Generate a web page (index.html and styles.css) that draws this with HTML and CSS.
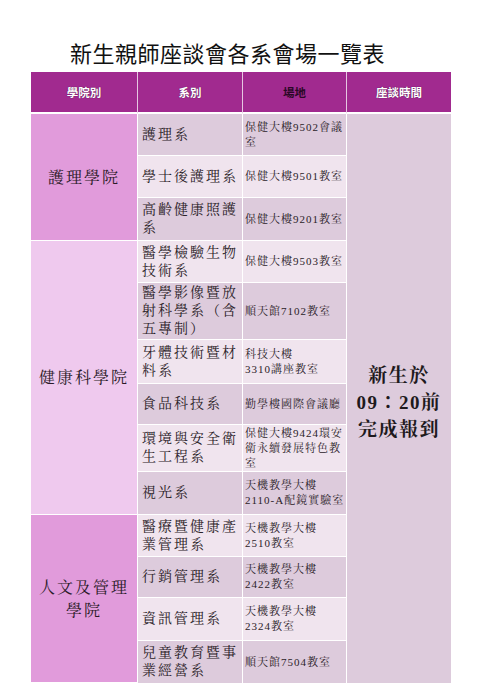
FILE: index.html
```html
<!DOCTYPE html>
<html lang="zh-Hant">
<head>
<meta charset="utf-8">
<link rel="stylesheet" href="styles.css">
</head>
<body>
<div class="page">
  <h1 class="title">新生親師座談會各系會場一覽表</h1>
  <table class="sched">
    <colgroup>
      <col class="c1"><col class="c2"><col class="c3"><col class="c4">
    </colgroup>
    <thead>
      <tr class="head">
        <th>學院別</th>
        <th>系別</th>
        <th class="dark">場地</th>
        <th>座談時間</th>
      </tr>
    </thead>
    <tbody>
      <tr class="h42">
        <td class="college pink" rowspan="3">護理學院</td>
        <td class="dept a">護理系</td>
        <td class="loc a">保健大樓9502會議室</td>
        <td class="time" rowspan="13">新生於<br>09：20前<br>完成報到</td>
      </tr>
      <tr class="h42">
        <td class="dept b">學士後護理系</td>
        <td class="loc b">保健大樓9501教室</td>
      </tr>
      <tr class="h43">
        <td class="dept a">高齡健康照護系</td>
        <td class="loc a">保健大樓9201教室</td>
      </tr>
      <tr class="h42">
        <td class="college light" rowspan="6">健康科學院</td>
        <td class="dept b">醫學檢驗生物技術系</td>
        <td class="loc b">保健大樓9503教室</td>
      </tr>
      <tr class="h57">
        <td class="dept a">醫學影像暨放射科學系（含五專制）</td>
        <td class="loc a">順天館7102教室</td>
      </tr>
      <tr class="h44">
        <td class="dept b">牙體技術暨材料系</td>
        <td class="loc b">科技大樓<br>3310講座教室</td>
      </tr>
      <tr class="h41">
        <td class="dept a">食品科技系</td>
        <td class="loc a">勤學樓國際會議廳</td>
      </tr>
      <tr class="h47">
        <td class="dept b">環境與安全衛生工程系</td>
        <td class="loc b">保健大樓9424環安衛永續發展特色教室</td>
      </tr>
      <tr class="h43">
        <td class="dept a">視光系</td>
        <td class="loc a">天機教學大樓<br>2110-A配鏡實驗室</td>
      </tr>
      <tr class="h42">
        <td class="college pink" rowspan="4">人文及管理學院</td>
        <td class="dept b">醫療暨健康產業管理系</td>
        <td class="loc b">天機教學大樓<br>2510教室</td>
      </tr>
      <tr class="h41">
        <td class="dept a">行銷管理系</td>
        <td class="loc a">天機教學大樓<br>2422教室</td>
      </tr>
      <tr class="h43">
        <td class="dept b">資訊管理系</td>
        <td class="loc b">天機教學大樓<br>2324教室</td>
      </tr>
      <tr class="h42">
        <td class="dept a">兒童教育暨事業經營系</td>
        <td class="loc a">順天館7504教室</td>
      </tr>
    </tbody>
  </table>
</div>
</body>
</html>
```

FILE: styles.css
```css
html, body {
  margin: 0;
  padding: 0;
  background: #ffffff;
}

.page {
  width: 485px;
  padding: 0 0 0 31px;
  box-sizing: border-box;
}

.title {
  margin: 0;
  padding: 38px 0 0 39px;
  height: 34px;
  font-family: "Noto Sans CJK TC", "Noto Sans CJK SC", sans-serif;
  font-weight: 400;
  font-size: 22px;
  line-height: 28px;
  letter-spacing: 0.5px;
  color: #111111;
}

.sched {
  width: 420px;
  table-layout: fixed;
  border-collapse: separate;
  border-spacing: 0;
  font-family: "Liberation Serif", "Noto Serif CJK TC", "Noto Sans CJK TC", serif;
  color: #2b2228;
}

.c1 { width: 107px; }
.c2 { width: 105px; }
.c3 { width: 104px; }
.c4 { width: 104px; }

.head {
  height: 42px;
}

.head th {
  background: #a12a8f;
  color: #ffffff;
  font-family: "Noto Sans CJK TC", sans-serif;
  font-size: 11.5px;
  font-weight: 700;
  text-shadow: 0 0 1px #3b0b36;
  border-right: 1px solid #e6c6e2;
  border-bottom: 2px solid #ffffff;
  padding: 0;
}

.head th:last-child {
  border-right: none;
}

.head th.dark {
  color: #2a0826;
  text-shadow: none;
}

td {
  padding: 0;
  border-right: 1px solid #ffffff;
  border-bottom: 1px solid #ffffff;
  vertical-align: middle;
}

tbody tr:last-child td {
  border-bottom: none;
}

.h41 { height: 41px; }
.h42 { height: 42px; }
.h43 { height: 43px; }
.h44 { height: 44px; }
.h47 { height: 47px; }
.h57 { height: 57px; }

.college {
  text-align: center;
  font-size: 16px;
  letter-spacing: 2px;
  line-height: 23px;
  padding: 0 4px;
  color: #2b1a28;
}

.pink { background: #e19bdb; }
.light { background: #efc9ee; }

.dept {
  font-size: 14px;
  letter-spacing: 2px;
  line-height: 18px;
  padding: 0 2px 0 4px;
}

.loc {
  font-size: 11px;
  letter-spacing: 1px;
  line-height: 15px;
  padding: 0 0 0 2px;
}

.a { background: #ddcbdc; }
.b { background: #f0e4ee; }

.time {
  background: #ddcbdc;
  border-right: none;
  border-bottom: none;
  text-align: center;
  font-size: 19px;
  font-weight: 700;
  letter-spacing: 1.5px;
  line-height: 27px;
  padding-top: 8px;
  color: #1e1a1d;
}
```
